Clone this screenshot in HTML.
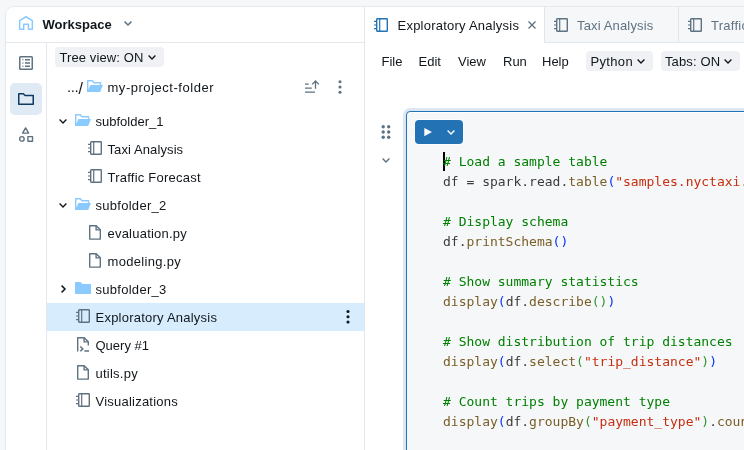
<!DOCTYPE html>
<html><head><meta charset="utf-8">
<style>
*{box-sizing:border-box;margin:0;padding:0}
html,body{width:744px;height:450px;overflow:hidden;background:#f6f7f9;font-family:"Liberation Sans",sans-serif;font-size:13px;color:#11171c}
#card{position:absolute;left:5px;top:6px;width:800px;height:500px;background:#fff;border:1px solid #e5e9ee;border-radius:9px 0 0 0}
.abs{position:absolute}
#hdr{position:absolute;left:6px;top:7px;width:358px;height:36px;border-bottom:1px solid #e4e8ed}
#rail{position:absolute;left:6px;top:43px;width:41px;height:420px;border-right:1px solid #e4e8ed}
#vsep{position:absolute;left:364px;top:7px;width:1px;height:450px;background:#e3e7ec}
.t{position:absolute;white-space:nowrap;line-height:16px;height:16px}
.g{color:#5f7281}
.btn{position:absolute;background:#eff1f4;border-radius:4px}
#sel{position:absolute;left:47px;top:303px;width:317px;height:28px;background:#d7edfe}
svg{position:absolute;overflow:visible}
#tabs{position:absolute;left:365px;top:7px;width:400px;height:36px;background:#f6f7f9;border-bottom:1px solid #e2e6eb}
#tab1{position:absolute;left:365px;top:7px;width:180px;height:36px;background:#fff;border-right:1px solid #e2e6eb}
#cell{position:absolute;left:406px;top:111px;width:400px;height:400px;background:#f6f7f9;border:1px solid #2272b4;border-radius:4px 0 0 0;box-shadow:0 0 0 3px #dbe8f4, inset 0 1px 0 #fff}
#run{position:absolute;left:415px;top:120px;width:48px;height:24px;background:#2272b4;border-radius:4px;box-shadow:0 0 0 1px rgba(255,255,255,.6)}
pre{position:absolute;left:443px;top:152px;font-family:"DejaVu Sans Mono","Liberation Mono",monospace;font-size:13px;line-height:20px;color:#3b3b3b;white-space:pre}
.c{color:#008000}.f{color:#795e26}.s{color:#c72e0f}.p1{color:#0431fa}.p2{color:#319331}
#w{position:absolute;left:0;top:0;width:744px;height:450px;overflow:hidden;will-change:transform}
</style></head><body><div id="w">
<div id="card"></div>
<div id="hdr"></div>
<div id="rail"></div>

<svg style="left:19px;top:16px" width="14" height="14" viewBox="0 0 14 14" fill="none" stroke="#8acaff" stroke-width="1.5" stroke-linejoin="round"><path d="M.65 4.7 7 .75l6.35 3.95v8.65H9.4V8.3H4.7v5.05H.65z"/></svg>
<div class="t" style="left:42.5px;top:17px;font-weight:bold;">Workspace</div>
<svg style="left:124px;top:21px" width="8" height="5" viewBox="0 0 8 5" fill="none" stroke="#5f7281" stroke-width="1.5"><path d="M.6.6 4 4 7.4.6"/></svg>
<div class="abs" style="left:10px;top:83px;width:32px;height:32px;background:#dfeaf4;border-radius:5px"></div>
<svg style="left:19px;top:56px" width="14" height="14" viewBox="0 0 14 14" fill="none" stroke="#5f7281"><rect x=".75" y=".75" width="12.5" height="12.5" rx=".8" stroke-width="1.5"/><path d="M6 3.75h5M6 7h5M6 10.25h5" stroke-width="1.4"/><path d="M3.2 3.75h1.3M3.2 7h1.3M3.2 10.25h1.3" stroke-width="1.2"/></svg>
<svg style="left:18px;top:93px" width="16" height="12" viewBox="0 0 16 12" fill="none" stroke="#0e3b63" stroke-width="1.5" stroke-linejoin="round"><path d="M.75.75h4.6l1.7 1.8h8.2v8.7H.75z"/></svg>
<svg style="left:19px;top:127px" width="15" height="15" viewBox="0 0 15 15" fill="none" stroke="#5f7281" stroke-width="1.4" stroke-linejoin="round"><path d="M6.6.9 9.6 6.1H3.6z"/><circle cx="2.9" cy="11.9" r="2.25"/><rect x="8.9" y="9.6" width="4.6" height="4.6"/></svg>
<div class="btn" style="left:55px;top:47px;width:109px;height:20px"></div>
<div class="t" style="left:59.5px;top:49.5px;letter-spacing:0.1px;">Tree view: ON</div>
<svg style="left:148px;top:55.2px" width="8" height="5" viewBox="0 0 8 5" fill="none" stroke="#11171c" stroke-width="1.35"><path d="M.6.6 4 4 7.4.6"/></svg>
<div id="sel"></div>
<div class="t" style="left:67px;top:78.5px;letter-spacing:-0.42px;font-size:15px;">...</div>
<div class="t" style="left:78.4px;top:80.5px;font-size:16px;">/</div>
<svg style="left:87px;top:80px" width="16" height="12" viewBox="0 0 16 12"><path d="M0 .6Q0 0 .6 0H5.6L7.3 2H13.6Q14.2 2 14.2 2.6V5H16L13.2 12H0z" fill="#8acaff"/><path d="M1.4 1.4H5L6.7 3.4H12.8V5H3.4L1.4 9.8z" fill="#fff"/></svg>
<div class="t" style="left:107.5px;top:79.5px;letter-spacing:0.53px;">my-project-folder</div>
<svg style="left:304px;top:80px" width="16" height="13" viewBox="0 0 16 13" fill="none" stroke="#5f7281" stroke-width="1.3"><path d="M1 4.1h3.7M1 8.2h6.8M1 12.2h10"/><path d="M11.5 8.7V.9M8.1 4.4 11.5 1l3.4 3.4"/></svg>
<svg style="left:338px;top:0px" width="4" height="450" viewBox="0 0 4 450" fill="#5f7281"><circle cx="2" cy="81.7" r="1.55"/><circle cx="2" cy="87" r="1.55"/><circle cx="2" cy="92.3" r="1.55"/></svg>
<svg style="left:59px;top:119px" width="8" height="5" viewBox="0 0 8 5" fill="none" stroke="#11171c" stroke-width="1.35"><path d="M.6.6 4 4 7.4.6"/></svg>
<svg style="left:75px;top:114px" width="16" height="12" viewBox="0 0 16 12"><path d="M0 .6Q0 0 .6 0H5.6L7.3 2H13.6Q14.2 2 14.2 2.6V5H16L13.2 12H0z" fill="#8acaff"/><path d="M1.4 1.4H5L6.7 3.4H12.8V5H3.4L1.4 9.8z" fill="#fff"/></svg>
<div class="t" style="left:95.5px;top:113.5px;">subfolder_1</div>
<svg style="left:88px;top:141px" width="14" height="14" viewBox="0 0 14 14" fill="none" stroke="#5f7281" stroke-width="1.4"><rect x="2.7" y=".7" width="10.6" height="12.6" rx=".6"/><path d="M5.7.6v12.8" stroke-width="1.2"/><path d="M0 3.45h2.6M0 7h2.6M0 10.55h2.6" stroke-width="1.2"/></svg>
<div class="t" style="left:107.5px;top:141.5px;letter-spacing:0.1px;">Taxi Analysis</div>
<svg style="left:88px;top:169px" width="14" height="14" viewBox="0 0 14 14" fill="none" stroke="#5f7281" stroke-width="1.4"><rect x="2.7" y=".7" width="10.6" height="12.6" rx=".6"/><path d="M5.7.6v12.8" stroke-width="1.2"/><path d="M0 3.45h2.6M0 7h2.6M0 10.55h2.6" stroke-width="1.2"/></svg>
<div class="t" style="left:107.5px;top:169.5px;letter-spacing:0.23px;">Traffic Forecast</div>
<svg style="left:59px;top:203px" width="8" height="5" viewBox="0 0 8 5" fill="none" stroke="#11171c" stroke-width="1.35"><path d="M.6.6 4 4 7.4.6"/></svg>
<svg style="left:75px;top:198px" width="16" height="12" viewBox="0 0 16 12"><path d="M0 .6Q0 0 .6 0H5.6L7.3 2H13.6Q14.2 2 14.2 2.6V5H16L13.2 12H0z" fill="#8acaff"/><path d="M1.4 1.4H5L6.7 3.4H12.8V5H3.4L1.4 9.8z" fill="#fff"/></svg>
<div class="t" style="left:95.5px;top:197.5px;letter-spacing:0.28px;">subfolder_2</div>
<svg style="left:89px;top:225px" width="12" height="15" viewBox="0 0 12 15" fill="none" stroke="#5f7281" stroke-width="1.4" stroke-linejoin="round"><path d="M.7.7h6.5l4.1 4.1v9.3H.7z"/><path d="M7.1.8v4.1h4.1"/></svg>
<div class="t" style="left:107.5px;top:225.5px;letter-spacing:0.22px;">evaluation.py</div>
<svg style="left:89px;top:253px" width="12" height="15" viewBox="0 0 12 15" fill="none" stroke="#5f7281" stroke-width="1.4" stroke-linejoin="round"><path d="M.7.7h6.5l4.1 4.1v9.3H.7z"/><path d="M7.1.8v4.1h4.1"/></svg>
<div class="t" style="left:107.5px;top:253.5px;letter-spacing:0.31px;">modeling.py</div>
<svg style="left:61px;top:285px" width="5" height="8" viewBox="0 0 5 8" fill="none" stroke="#11171c" stroke-width="1.5"><path d="M.6.6 4 4 .6 7.4"/></svg>
<svg style="left:75px;top:282px" width="16" height="12" viewBox="0 0 16 12"><path d="M0 .6Q0 0 .6 0H5.6L7.3 2H15.4Q16 2 16 2.6V11.4Q16 12 15.4 12H.6Q0 12 0 11.4z" fill="#8acaff"/></svg>
<div class="t" style="left:95.5px;top:281.5px;letter-spacing:0.28px;">subfolder_3</div>
<svg style="left:76px;top:309px" width="14" height="14" viewBox="0 0 14 14" fill="none" stroke="#5f7281" stroke-width="1.4"><rect x="2.7" y=".7" width="10.6" height="12.6" rx=".6"/><path d="M5.7.6v12.8" stroke-width="1.2"/><path d="M0 3.45h2.6M0 7h2.6M0 10.55h2.6" stroke-width="1.2"/></svg>
<div class="t" style="left:95.5px;top:309.5px;letter-spacing:0.23px;">Exploratory Analysis</div>
<svg style="left:77px;top:337px" width="12" height="15" viewBox="0 0 12 15" fill="none" stroke="#5f7281" stroke-width="1.4" stroke-linejoin="round"><path d="M.7 14.6V.7h6.5l4.1 4.1v3.8"/><path d="M7.1.8v4.1h4.1"/><path d="M3.3 9.5l2.5 2.4-2.5 2.4M7.4 14.1h4.6" stroke-linejoin="miter" stroke-width="1.5"/></svg>
<div class="t" style="left:95.5px;top:337.5px;">Query #1</div>
<svg style="left:77px;top:365px" width="12" height="15" viewBox="0 0 12 15" fill="none" stroke="#5f7281" stroke-width="1.4" stroke-linejoin="round"><path d="M.7.7h6.5l4.1 4.1v9.3H.7z"/><path d="M7.1.8v4.1h4.1"/></svg>
<div class="t" style="left:95.5px;top:365.5px;letter-spacing:0.25px;">utils.py</div>
<svg style="left:76px;top:393px" width="14" height="14" viewBox="0 0 14 14" fill="none" stroke="#5f7281" stroke-width="1.4"><rect x="2.7" y=".7" width="10.6" height="12.6" rx=".6"/><path d="M5.7.6v12.8" stroke-width="1.2"/><path d="M0 3.45h2.6M0 7h2.6M0 10.55h2.6" stroke-width="1.2"/></svg>
<div class="t" style="left:95.5px;top:393.5px;letter-spacing:0.23px;">Visualizations</div>
<svg style="left:346px;top:0px" width="4" height="450" viewBox="0 0 4 450" fill="#11171c"><circle cx="2" cy="311.5" r="1.55"/><circle cx="2" cy="316.7" r="1.55"/><circle cx="2" cy="322" r="1.55"/></svg>
<div id="tabs"></div><div id="tab1"></div><div id="vsep"></div>
<div class="abs" style="left:678px;top:7px;width:1px;height:36px;background:#e2e6eb"></div>
<svg style="left:374px;top:18px" width="14" height="14" viewBox="0 0 14 14" fill="none" stroke="#2272b4" stroke-width="1.4"><rect x="2.7" y=".7" width="10.6" height="12.6" rx=".6"/><path d="M5.7.6v12.8" stroke-width="1.2"/><path d="M0 3.45h2.6M0 7h2.6M0 10.55h2.6" stroke-width="1.2"/></svg>
<div class="t" style="left:397.5px;top:17.5px;letter-spacing:0.23px;">Exploratory Analysis</div>
<svg style="left:528px;top:21px" width="8" height="8" viewBox="0 0 8 8" fill="none" stroke="#5f7281" stroke-width="1.3"><path d="M.5.5l7 7M7.5.5l-7 7"/></svg>
<svg style="left:554px;top:18px" width="14" height="14" viewBox="0 0 14 14" fill="none" stroke="#5f7281" stroke-width="1.4"><rect x="2.7" y=".7" width="10.6" height="12.6" rx=".6"/><path d="M5.7.6v12.8" stroke-width="1.2"/><path d="M0 3.45h2.6M0 7h2.6M0 10.55h2.6" stroke-width="1.2"/></svg>
<div class="t g" style="left:577px;top:17.5px;letter-spacing:0.15px;">Taxi Analysis</div>
<svg style="left:688px;top:18px" width="14" height="14" viewBox="0 0 14 14" fill="none" stroke="#5f7281" stroke-width="1.4"><rect x="2.7" y=".7" width="10.6" height="12.6" rx=".6"/><path d="M5.7.6v12.8" stroke-width="1.2"/><path d="M0 3.45h2.6M0 7h2.6M0 10.55h2.6" stroke-width="1.2"/></svg>
<div class="t g" style="left:711px;top:17.5px;letter-spacing:0.25px;">Traffic Forecast</div>
<div class="t" style="left:381.5px;top:53.5px;">File</div>
<div class="t" style="left:418.5px;top:53.5px;">Edit</div>
<div class="t" style="left:458px;top:53.5px;">View</div>
<div class="t" style="left:503px;top:53.5px;">Run</div>
<div class="t" style="left:542px;top:53.5px;">Help</div>
<div class="btn" style="left:586px;top:51px;width:67px;height:20px"></div>
<div class="t" style="left:590.5px;top:53.5px;letter-spacing:0.33px;">Python</div>
<svg style="left:637px;top:59.2px" width="8" height="5" viewBox="0 0 8 5" fill="none" stroke="#11171c" stroke-width="1.35"><path d="M.6.6 4 4 7.4.6"/></svg>
<div class="btn" style="left:661px;top:51px;width:78.5px;height:20px"></div>
<div class="t" style="left:665px;top:53.5px;letter-spacing:0.12px;">Tabs: ON</div>
<svg style="left:724px;top:59.2px" width="8" height="5" viewBox="0 0 8 5" fill="none" stroke="#11171c" stroke-width="1.35"><path d="M.6.6 4 4 7.4.6"/></svg>
<div id="cell"></div><div id="run"></div>
<svg style="left:424px;top:128px" width="8" height="8" viewBox="0 0 8 8" fill="#fff"><path d="M.3 0 8 4.1.3 8.2z"/></svg>
<svg style="left:447px;top:130px" width="8" height="5" viewBox="0 0 8 5" fill="none" stroke="#fff" stroke-width="1.4"><path d="M.6.6 4 4 7.4.6"/></svg>
<svg style="left:381px;top:124px" width="10" height="16" viewBox="0 0 10 16" fill="#5f7281"><circle cx="2.2" cy="2.7" r="1.7"/><circle cx="2.2" cy="8" r="1.7"/><circle cx="2.2" cy="13.2" r="1.7"/><circle cx="7.7" cy="2.7" r="1.7"/><circle cx="7.7" cy="8" r="1.7"/><circle cx="7.7" cy="13.2" r="1.7"/></svg>
<svg style="left:382px;top:158.3px" width="8" height="5" viewBox="0 0 8 5" fill="none" stroke="#5f7281" stroke-width="1.4"><path d="M.6.6 4 4 7.4.6"/></svg>
<div class="abs" style="left:443px;top:152px;width:2px;height:19px;background:#000"></div>
<pre><span class="c"># Load a sample table</span>
df = spark.read.<span class="f">table</span><span class="p1">(</span><span class="s">"samples.nyctaxi.trips"</span><span class="p1">)</span>

<span class="c"># Display schema</span>
df.<span class="f">printSchema</span><span class="p1">()</span>

<span class="c"># Show summary statistics</span>
<span class="f">display</span><span class="p1">(</span>df.<span class="f">describe</span><span class="p2">()</span><span class="p1">)</span>

<span class="c"># Show distribution of trip distances</span>
<span class="f">display</span><span class="p1">(</span>df.<span class="f">select</span><span class="p2">(</span><span class="s">"trip_distance"</span><span class="p2">)</span><span class="p1">)</span>

<span class="c"># Count trips by payment type</span>
<span class="f">display</span><span class="p1">(</span>df.<span class="f">groupBy</span><span class="p2">(</span><span class="s">"payment_type"</span><span class="p2">)</span>.<span class="f">count</span><span class="p2">()</span><span class="p1">)</span></pre>
</div></body></html>
